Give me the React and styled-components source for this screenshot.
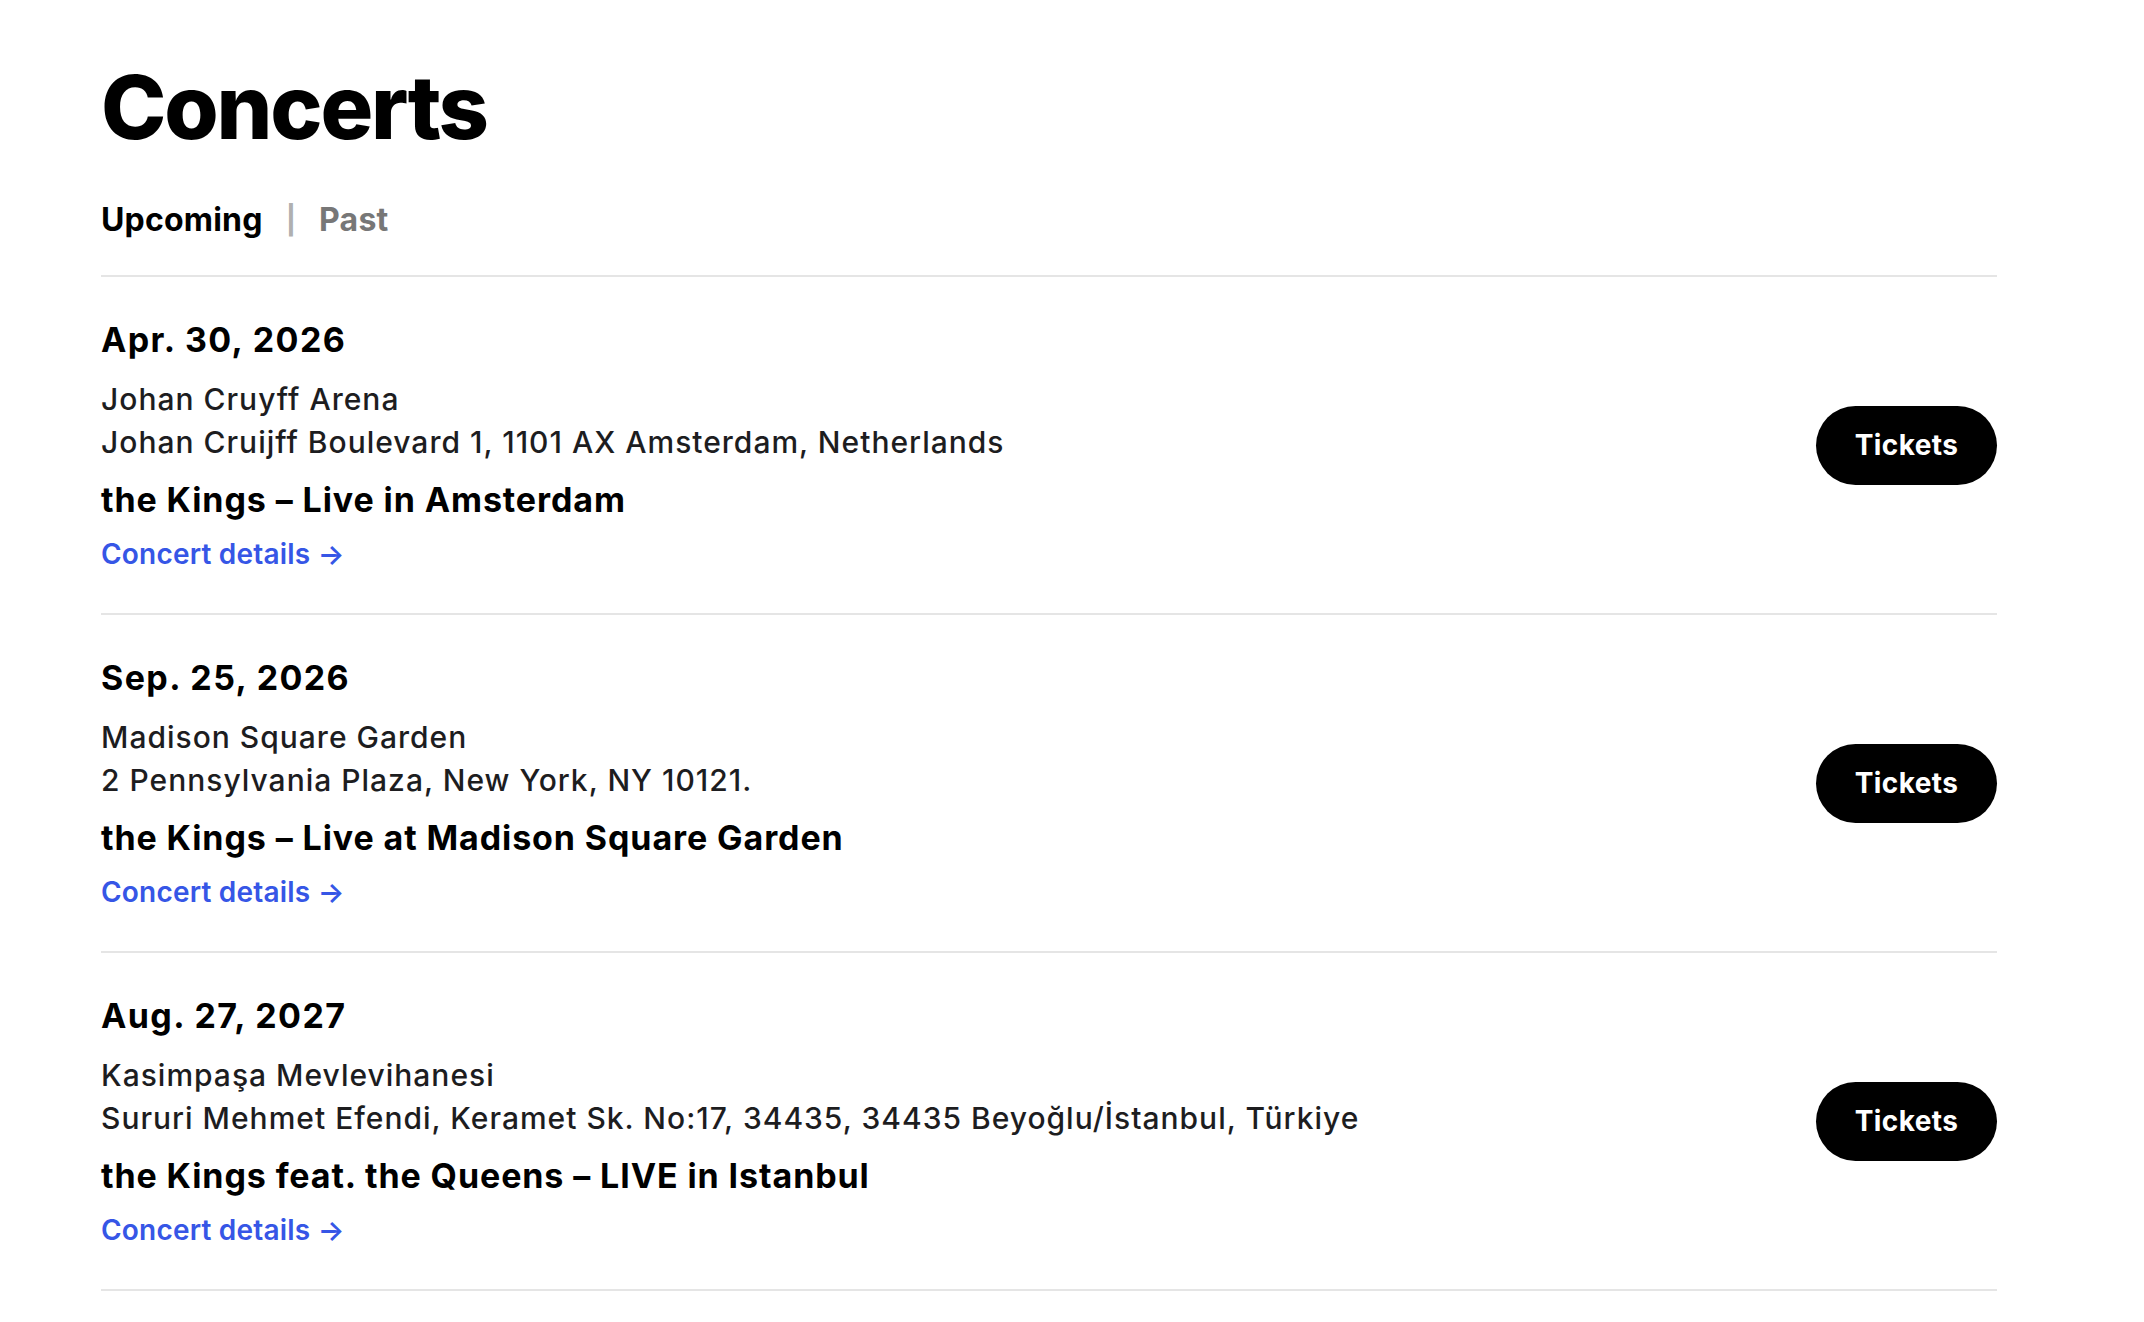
import styled, { createGlobalStyle } from 'styled-components'

const GlobalStyle = createGlobalStyle`
  body {
    margin: 0;
    background: #fff;
    font-family: Inter, "Noto Sans", sans-serif;
    color: #000;
  }
`

const concerts = [
  {
    date: 'Apr. 30, 2026',
    venue: 'Johan Cruyff Arena',
    address: 'Johan Cruijff Boulevard 1, 1101 AX Amsterdam, Netherlands',
    title: 'the Kings – Live in Amsterdam',
  },
  {
    date: 'Sep. 25, 2026',
    venue: 'Madison Square Garden',
    address: '2 Pennsylvania Plaza, New York, NY 10121.',
    title: 'the Kings – Live at Madison Square Garden',
  },
  {
    date: 'Aug. 27, 2027',
    venue: 'Kasimpaşa Mevlevihanesi',
    address: 'Sururi Mehmet Efendi, Keramet Sk. No:17, 34435, 34435 Beyoğlu/İstanbul, Türkiye',
    title: 'the Kings feat. the Queens – LIVE in Istanbul',
  },
]

const App = () => {
  return (
    <>
      <GlobalStyle />
      <Page>
        <Title>Concerts</Title>
        <Tabs>
          <Tab active>Upcoming</Tab>
          <Separator>|</Separator>
          <Tab>Past</Tab>
        </Tabs>
        <List>
          {concerts.map((c) => (
            <Row key={c.date}>
              <Info>
                <DateText>{c.date}</DateText>
                <Venue>
                  <p>{c.venue}</p>
                  <p>{c.address}</p>
                </Venue>
                <EventTitle>{c.title}</EventTitle>
                <DetailsLink href="#">Concert details →</DetailsLink>
              </Info>
              <TicketButton>Tickets</TicketButton>
            </Row>
          ))}
        </List>
      </Page>
    </>
  )
}

export default App

const Page = styled.main`
  width: 1896px;
  padding: 63px 0 0 101px;
`

const Title = styled.h1`
  margin: 0;
  font-size: 88px;
  line-height: 88px;
  font-weight: 800;
  letter-spacing: -2.2px;
`

const Tabs = styled.nav`
  display: flex;
  align-items: center;
  gap: 23px;
  margin-top: 50px;
  padding-bottom: 36px;
  font-size: 32px;
  line-height: 38px;
  font-weight: 700;
`

const Tab = styled.span`
  color: ${({ active }) => (active ? '#000' : '#777')};
  letter-spacing: 0.2px;
`

const Separator = styled.span`
  color: #b0b0b0;
  font-size: 28px;
  font-weight: 700;
`

const List = styled.div`
  border-bottom: 2px solid #e5e5e5;
`

const Row = styled.section`
  display: flex;
  align-items: center;
  justify-content: space-between;
  border-top: 2px solid #e5e5e5;
  padding: 42px 0 42px;
`

const Info = styled.div`
  display: flex;
  flex-direction: column;
`

const DateText = styled.h2`
  margin: 0;
  font-size: 34px;
  line-height: 41px;
  font-weight: 700;
  letter-spacing: 1.4px;
`

const Venue = styled.div`
  margin-top: 18px;
  font-size: 30px;
  line-height: 43px;
  font-weight: 450;
  color: #1d1d1f;
  letter-spacing: 1px;
  p {
    margin: 0;
  }
`

const EventTitle = styled.h3`
  margin: 15px 0 0;
  font-size: 34px;
  line-height: 41px;
  font-weight: 700;
  letter-spacing: 0.9px;
`

const DetailsLink = styled.a`
  margin-top: 17px;
  font-size: 28px;
  line-height: 34px;
  font-weight: 600;
  color: #3656e6;
  letter-spacing: 0.2px;
  text-decoration: none;
`

const TicketButton = styled.button`
  width: 181px;
  height: 79px;
  border: none;
  border-radius: 40px;
  background: #000;
  color: #fff;
  font-family: inherit;
  font-size: 28px;
  font-weight: 700;
  letter-spacing: 0.4px;
  cursor: pointer;
`
